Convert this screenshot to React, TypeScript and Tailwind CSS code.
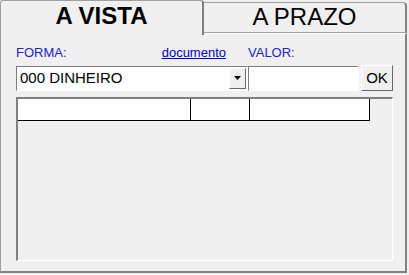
import React from "react";

export default function App() {
  return (
    <div className="w-[409px] h-[275px] bg-[#f0f0f0] flex flex-col font-['Liberation_Sans',Arial,sans-serif] overflow-hidden">
      {/* Tabs */}
      <div className="flex h-[33px] relative z-10">
        <div className="w-[204px] h-[35px] bg-[#f0f0f0] border-l border-t border-[#a0a0a0] border-r-2 border-r-[#808080] rounded-tl-[3px] rounded-tr-[3px] flex items-start justify-center pt-[1px]">
          <span className="text-[24px] leading-[28px] font-bold text-black">A VISTA</span>
        </div>
        <div className="w-[203px] h-[31px] mt-[2px] bg-[#f0f0f0] border-t border-[#a0a0a0] border-r-2 border-r-[#808080] border-b border-b-[#a0a0a0] rounded-tr-[4px] flex items-start justify-center">
          <span className="text-[24px] leading-[28px] text-black">A PRAZO</span>
        </div>
      </div>
      {/* Body */}
      <div className="w-[407px] h-[240px] border-l border-[#a0a0a0] border-r-2 border-r-[#808080] border-b-2 border-b-[#808080] border-t border-t-white flex flex-col pl-[15px]">
        <div className="flex mt-[11px] h-[15px] items-end text-[13px] leading-[15px]">
          <div className="w-[232px] flex justify-between pr-[22px]">
            <span className="text-[#2222c8]">FORMA:</span>
            <span className="text-[#0000cc] underline">documento</span>
          </div>
          <span className="text-[#2222c8]">VALOR:</span>
        </div>
        <div className="flex items-center mt-[5px] h-[26px]">
          <div className="w-[232px] h-[25px] bg-white border-t border-l border-[#808080] border-r border-b border-r-white border-b-white flex items-center">
            <span className="flex-1 pl-[3px] text-[15px] leading-[18px] text-black">000 DINHEIRO</span>
            <div className="w-[17px] h-[21px] mr-[1px] bg-[#f0f0f0] border-t border-l border-white border-r border-b border-r-[#696969] border-b-[#696969] flex items-center justify-center">
              <svg width="7" height="4" viewBox="0 0 7 4"><path d="M0 0H7L3.5 4Z" fill="#000" /></svg>
            </div>
          </div>
          <div className="w-[111px] h-[25px] bg-white border-t border-l border-[#808080] border-r border-b border-r-white border-b-white" />
          <div className="ml-[2px] w-[32px] h-[26px] bg-[#f0f0f0] border-t border-l border-white border-r border-b border-r-[#696969] border-b-[#696969] flex items-center justify-center text-[15px] leading-[18px] text-black">
            OK
          </div>
        </div>
        <div className="mt-[6px] w-[377px] h-[164px] border-t-2 border-l-2 border-[#808080] border-r border-b border-r-white border-b-white flex flex-col">
          <div className="flex h-[22px]">
            <div className="w-[173px] h-[22px] bg-white border-r border-b border-black" />
            <div className="w-[59px] h-[22px] bg-white border-r border-b border-black" />
            <div className="w-[120px] h-[22px] bg-white border-r border-b border-black" />
          </div>
        </div>
      </div>
    </div>
  );
}
